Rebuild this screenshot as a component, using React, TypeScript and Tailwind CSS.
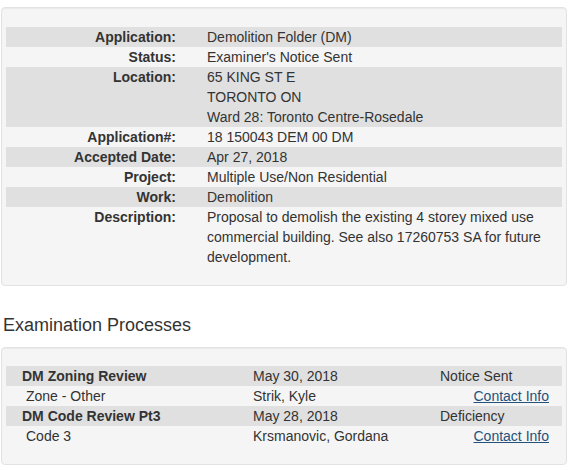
import React from "react";

type Detail = { label: string; lines: string[] };

const details: Detail[] = [
  { label: "Application:", lines: ["Demolition Folder (DM)"] },
  { label: "Status:", lines: ["Examiner's Notice Sent"] },
  { label: "Location:", lines: ["65 KING ST E", "TORONTO ON", "Ward 28: Toronto Centre-Rosedale"] },
  { label: "Application#:", lines: ["18 150043 DEM 00 DM"] },
  { label: "Accepted Date:", lines: ["Apr 27, 2018"] },
  { label: "Project:", lines: ["Multiple Use/Non Residential"] },
  { label: "Work:", lines: ["Demolition"] },
  {
    label: "Description:",
    lines: [
      "Proposal to demolish the existing 4 storey mixed use",
      "commercial building. See also 17260753 SA for future",
      "development.",
    ],
  },
];

type Process = { name: string; date: string; status: string; sub: string; examiner: string };

const processes: Process[] = [
  { name: "DM Zoning Review", date: "May 30, 2018", status: "Notice Sent", sub: "Zone - Other", examiner: "Strik, Kyle" },
  { name: "DM Code Review Pt3", date: "May 28, 2018", status: "Deficiency", sub: "Code 3", examiner: "Krsmanovic, Gordana" },
];

export default function App() {
  return (
    <div
      className="w-[573px] h-[471px] bg-white text-[#333] text-[14px] leading-[20px] overflow-hidden"
      style={{ fontFamily: '"Liberation Sans", Arial, sans-serif' }}
    >
      <div className="pt-[7px] pl-[1px] pr-[6px]">
        {/* Folder details */}
        <div className="bg-[#f5f5f5] border border-[#e3e3e3] rounded-[4px] shadow-[inset_0_1px_1px_rgba(0,0,0,0.05)] pt-[19px] pb-[18px] px-[4px]">
          {details.map((d, i) => (
            <div key={d.label} className={`flex ${i % 2 === 0 ? "bg-[#e0e0e0]" : ""}`}>
              <div className="w-[170px] shrink-0 text-right font-bold">{d.label}</div>
              <div className="pl-[31px]">
                {d.lines.map((l) => (
                  <div key={l}>{l}</div>
                ))}
              </div>
            </div>
          ))}
        </div>

        <h3 className="mt-[29px] ml-[2px] text-[18px] leading-[20px]">Examination Processes</h3>

        {/* Examination processes */}
        <div className="mt-[12px] bg-[#f5f5f5] border border-[#e3e3e3] rounded-[4px] shadow-[inset_0_1px_1px_rgba(0,0,0,0.05)] pt-[18px] pb-[18px] px-[4px]">
          {processes.map((p) => (
            <React.Fragment key={p.name}>
              <div className="grid grid-cols-[247px_187px_1fr] bg-[#e0e0e0] pr-[13px]">
                <div className="pl-[16px] font-bold">{p.name}</div>
                <div>{p.date}</div>
                <div>{p.status}</div>
              </div>
              <div className="grid grid-cols-[247px_187px_1fr] pr-[13px]">
                <div className="pl-[20px]">{p.sub}</div>
                <div>{p.examiner}</div>
                <div className="text-right">
                  <a href="#" className="text-[#23527c] underline">
                    Contact Info
                  </a>
                </div>
              </div>
            </React.Fragment>
          ))}
        </div>
      </div>
    </div>
  );
}
